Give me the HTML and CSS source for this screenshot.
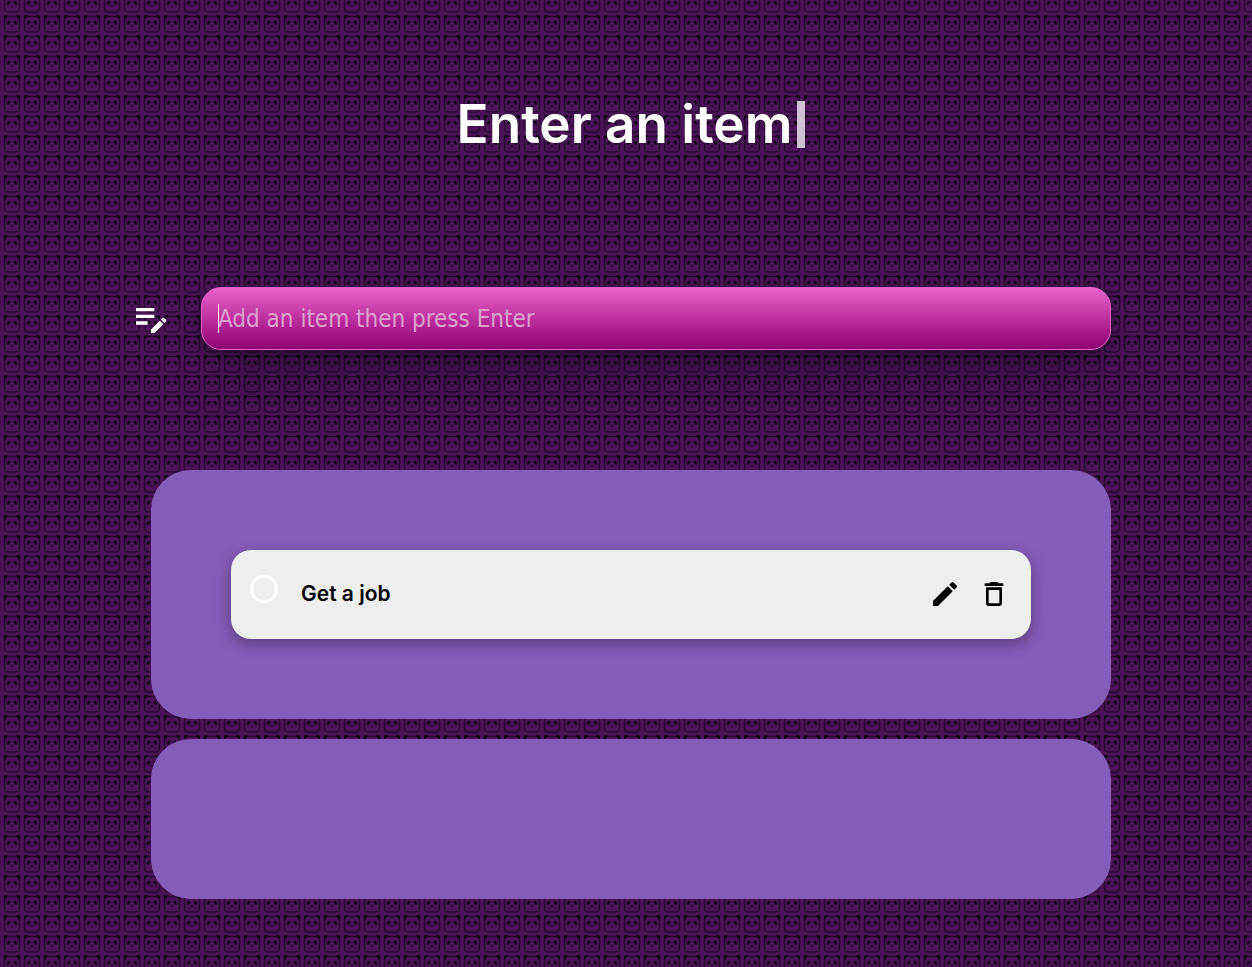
FILE: index.html
```html
<!DOCTYPE html>
<html lang="en">
<head>
<meta charset="utf-8">
<meta name="viewport" content="width=device-width, initial-scale=1">
<title>To-do list</title>
<link rel="stylesheet" href="styles.css">
</head>
<body>
<main class="page">
  <h1 class="title">Enter an item<span class="cursor"></span></h1>
  <form class="entry">
    <label class="entry-label" for="new-item" aria-label="New item">
      <svg class="note-icon" viewBox="0 0 24 24" aria-hidden="true"><path d="M3 10h11v2H3v-2zm0-2h11V6H3v2zm0 8h7v-2H3v2zm15.01-3.13.71-.71c.39-.39 1.02-.39 1.41 0l.71.71c.39.39.39 1.02 0 1.41l-.71.71-2.12-2.12zm-.71.71-5.3 5.3V21h2.12l5.3-5.3-2.12-2.12z"/></svg>
    </label>
    <div class="field">
      <input class="entry-input" id="new-item" type="text" placeholder="Add an item then press Enter" autocomplete="off">
      <span class="caret"></span>
    </div>
  </form>
  <ul class="panel">
    <li class="item">
      <input class="check" type="checkbox" id="item-1">
      <label class="item-text" for="item-1">Get a job</label>
      <button class="icon-button" type="button" aria-label="Edit">
        <svg viewBox="0 0 24 24" aria-hidden="true"><path d="M3 17.25V21h3.75L17.81 9.94l-3.75-3.75L3 17.25zM20.71 7.04c.39-.39.39-1.02 0-1.41l-2.34-2.34c-.39-.39-1.02-.39-1.41 0l-1.83 1.83 3.75 3.75 1.83-1.83z"/></svg>
      </button>
      <button class="icon-button" type="button" aria-label="Delete">
        <svg viewBox="0 0 24 24" aria-hidden="true"><path d="M6 19c0 1.1.9 2 2 2h8c1.1 0 2-.9 2-2V7H6v12zM8 9h8v10H8V9zm7.5-5l-1-1h-5l-1 1H5v2h14V4z"/></svg>
      </button>
    </li>
  </ul>
  <ul class="panel"></ul>
</main>
</body>
</html>
```
FILE: styles.css
```css
* {
  box-sizing: border-box;
}

body {
  margin: 0;
  min-height: 100vh;
  font-family: Inter, "Liberation Sans", sans-serif;
  background-color: #4b1357;
  background-image: url("data:image/svg+xml,%3Csvg xmlns='http://www.w3.org/2000/svg' width='20' height='20'%3E%3Crect x='2.5' y='2.5' width='15' height='15.5' rx='4' fill='none' stroke='%23210a2a' stroke-opacity='.8' stroke-width='1.6'/%3E%3Cg fill='%230b0010'%3E%3Cpath d='M2 4.8V2.6Q2 1.2 3.4 1.2H5.8V2.6Q3.8 3 3.4 4.8zM18 4.8V2.6Q18 1.2 16.6 1.2H14.2V2.6Q16.2 3 16.6 4.8z'/%3E%3Cpath d='M5 10.4V8.6H6V7H8.2V9H7.2V10.4zM15 10.4V8.6H14V7H11.8V9H12.8V10.4z'/%3E%3C/g%3E%3Cpath d='M8.6 11.4h2.8L10.6 13h-1.2z' fill='%23120018'/%3E%3C/svg%3E");
  background-position: 2px 14px;
}

.page {
  display: flex;
  flex-direction: column;
  gap: 20px;
  padding: 87px 141px 68px 151px;
}

.title {
  display: flex;
  justify-content: center;
  align-items: center;
  gap: 5px;
  margin: 0;
  color: #fff;
  font-size: 53px;
  font-weight: 600;
  line-height: 75px;
}

.cursor {
  width: 8px;
  height: 47px;
  background: #cfc0d3;
}

.entry {
  display: flex;
  align-items: center;
  gap: 30px;
  margin: 105px 0 100px -20px;
}

.entry-label {
  display: flex;
  padding-bottom: 2px;
}

.note-icon {
  width: 40px;
  height: 40px;
  fill: #fff;
}

.field {
  position: relative;
  flex: 1;
}

.entry-input {
  display: block;
  width: 100%;
  height: 63px;
  padding: 0 16px;
  border: 1px solid #e961c8;
  border-radius: 20px;
  outline: 0;
  color: #fff;
  background: linear-gradient(#e961ca, #8f0070);
  box-shadow: 0 5px 15px rgba(0, 0, 0, .35), 0 50px 50px -20px rgba(0, 0, 0, .35);
  font: 24px "DejaVu Sans Condensed", "Noto Sans", sans-serif;
}

.entry-input::placeholder {
  color: #dfa0d2;
  opacity: 1;
}

.caret {
  position: absolute;
  top: 17px;
  left: 17px;
  width: 1px;
  height: 29px;
  background: #fff;
}

.panel {
  min-height: 160px;
  margin: 0;
  padding: 80px;
  border-radius: 40px;
  background: #855db9;
  list-style: none;
}

.item {
  display: flex;
  align-items: center;
  min-height: 89px;
  padding: 0 21px 2px 19px;
  border-radius: 20px;
  background: #eee;
  box-shadow: 0 5px 15px rgba(0, 0, 0, .35);
}

.check {
  appearance: none;
  width: 28px;
  height: 28px;
  margin: 0 23px 10px 0;
  border: 3px solid #fff;
  border-radius: 50%;
}

.check:checked {
  background: #865ebb;
}

.item-text {
  flex: 1;
  color: #000;
  font-size: 21px;
  font-weight: 600;
}

.icon-button {
  display: flex;
  padding: 0;
  border: 0;
  color: #000;
  background: none;
  cursor: pointer;
}

.icon-button + .icon-button {
  margin-left: 17px;
}

.icon-button svg {
  width: 32px;
  height: 32px;
  fill: currentColor;
}
```
